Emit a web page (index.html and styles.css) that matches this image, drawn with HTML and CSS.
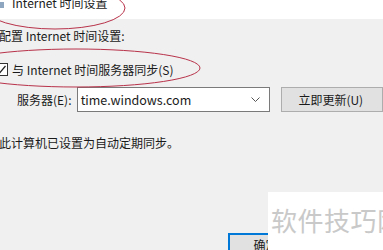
FILE: index.html
```html
<!DOCTYPE html>
<html lang="zh-CN">
<head>
    <meta charset="UTF-8">
    <meta name="viewport" content="width=device-width, initial-scale=1.0">
    <title>Internet 时间设置</title>
    <link rel="stylesheet" href="styles.css">
</head>
<body>
    <div class="dialog">
        <div class="title-bar">
            <span class="title-icon"></span>
            <span class="title-text">Internet 时间设置</span>
        </div>

        <div class="content">
            <p class="intro">配置 Internet 时间设置:</p>

            <label class="sync-row">
                <span class="checkbox">
                    <svg width="13" height="13" viewBox="0 0 13 13">
                        <polyline points="2.5,6.5 5,9.5 10.5,3" fill="none" stroke="#222" stroke-width="1.2"/>
                    </svg>
                </span>
                <span>与 Internet 时间服务器同步(S)</span>
            </label>

            <div class="server-row">
                <span class="server-label">服务器(E):</span>
                <div class="combo">
                    <span class="combo-value">time.windows.com</span>
                    <svg class="combo-arrow" width="9" height="5" viewBox="0 0 9 5">
                        <polyline points="0.5,0.5 4.5,4.5 8.5,0.5" fill="none" stroke="#555" stroke-width="1"/>
                    </svg>
                </div>
                <button class="update-button">立即更新(U)</button>
            </div>

            <p class="status">此计算机已设置为自动定期同步。</p>

            <div class="footer">
                <button class="ok-button">确定</button>
            </div>
        </div>

        <!-- hand drawn marks from the screenshot -->
        <svg class="marks" width="383" height="250" viewBox="0 0 383 250">
            <ellipse cx="55" cy="8" rx="70" ry="21" fill="none" stroke="#b8324a" stroke-width="1"/>
            <ellipse cx="76" cy="68" rx="124" ry="19" fill="none" stroke="#b8324a" stroke-width="1"/>
        </svg>

        <div class="watermark">软件技巧网</div>
    </div>
</body>
</html>
```

FILE: styles.css
```css
* {
    margin: 0;
    padding: 0;
    box-sizing: border-box;
}

body {
    width: 383px;
    height: 250px;
    overflow: hidden;
    background-color: #f0f0f0;
    color: #1a1a1a;
    font-family: 'Noto Sans CJK SC', 'Liberation Sans', sans-serif;
    font-size: 12px;
}

.dialog {
    position: relative;
    width: 383px;
    height: 250px;
    overflow: hidden;
}

.title-bar {
    height: 19px;
    background: #ffffff;
    display: flex;
    align-items: flex-start;
    overflow: hidden;
}

.title-icon {
    width: 4px;
    height: 6px;
    margin-top: 2px;
    background: #8fa6c0;
}

.title-text {
    margin-left: 8px;
    margin-top: -5px;
    line-height: 16px;
}

.content {
    display: flex;
    flex-direction: column;
}

.intro {
    margin-top: 9px;
    line-height: 16px;
    margin-left: -1px;
}

.sync-row {
    margin-top: 17px;
    height: 16px;
    display: flex;
    align-items: center;
    gap: 4px;
}

.checkbox {
    width: 13px;
    height: 13px;
    margin-left: -5px;
    border: 1px solid #333;
    background: #ffffff;
    display: flex;
}

.checkbox svg {
    margin: -1px;
}

.server-row {
    margin-top: 10px;
    display: flex;
    align-items: center;
    height: 25px;
}

.server-label {
    padding-left: 17px;
    width: 77px;
}

.combo {
    width: 194px;
    height: 25px;
    border: 1px solid #7a7a7a;
    background: #ffffff;
    display: flex;
    align-items: center;
    justify-content: space-between;
    padding: 0 9px 0 3px;
}

.combo-value {
    font-size: 12.5px;
}

.update-button {
    margin-left: 11px;
    width: 103px;
    height: 25px;
    border: 1px solid #adadad;
    background: #e1e1e1;
    font-family: inherit;
    font-size: 12px;
    color: #1a1a1a;
    padding-right: 2px;
}

.status {
    margin-top: 23px;
    line-height: 16px;
    margin-left: -1px;
}

.footer {
    margin-top: 82px;
    display: flex;
}

.ok-button {
    margin-left: 228px;
    width: 75px;
    height: 23px;
    border: 2px solid #0078d7;
    background: #e1e1e1;
    font-family: inherit;
    font-size: 12px;
    color: #1a1a1a;
}

.marks {
    position: absolute;
    top: 0;
    left: 0;
    pointer-events: none;
}

.watermark {
    position: absolute;
    left: 268px;
    top: 192px;
    width: 130px;
    height: 58px;
    background: #ffffff;
    color: #c9c9c9;
    font-size: 26px;
    letter-spacing: 0.5px;
    line-height: 1;
    padding: 15px 0 0 3px;
    white-space: nowrap;
}
```
